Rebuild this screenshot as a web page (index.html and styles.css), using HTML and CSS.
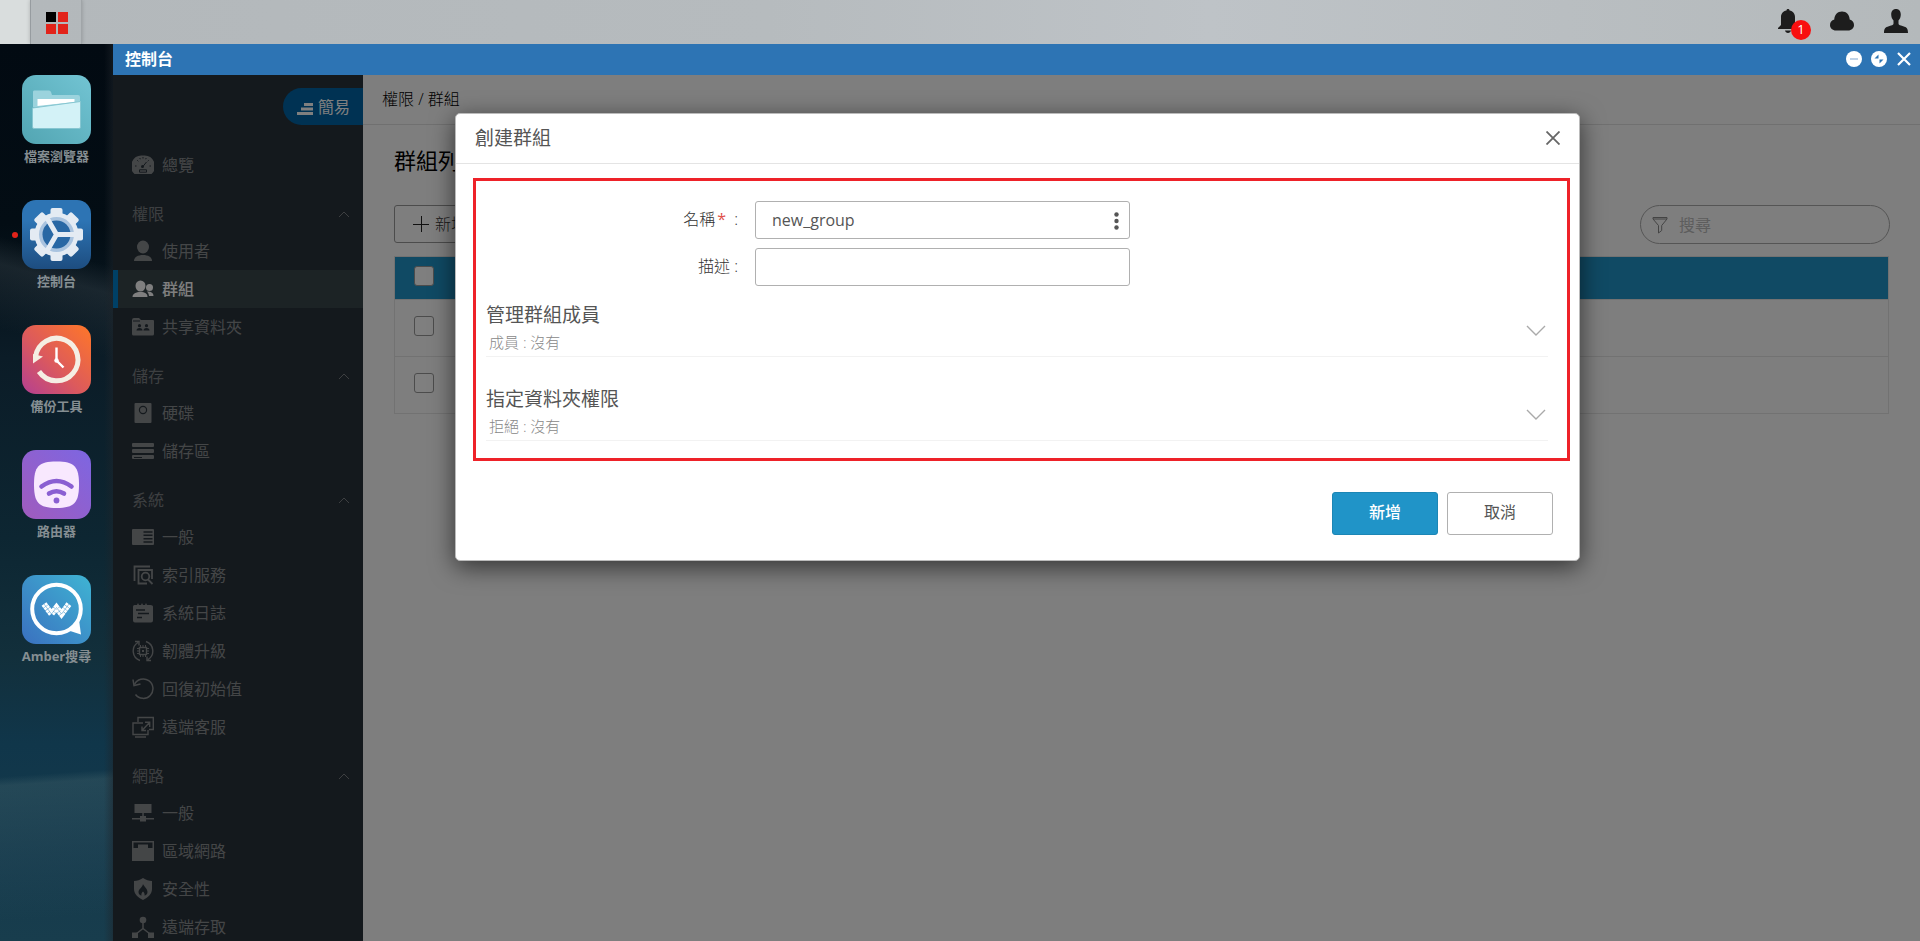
FILE: index.html
```html
<!DOCTYPE html>
<html lang="zh-Hant">
<head>
    <meta charset="UTF-8">
    <meta name="viewport" content="width=device-width, initial-scale=1.0">
    <title>控制台</title>
    <link rel="stylesheet" href="styles.css">
</head>
<body>
    <header class="topbar">
        <button class="logo-btn" aria-label="桌面">
            <svg width="24" height="24" viewBox="0 0 24 24">
                <path fill="#000" d="M1 1h10v10H1z"/>
                <path fill="#e2231a" d="M13 1h10v10H13zM1 13h10v10H1zM13 13h10v10H13z"/>
            </svg>
        </button>
        <div class="tray">
            <button class="tray-btn" aria-label="通知">
                <svg width="24" height="24" viewBox="0 0 24 24" fill="#1d1d1d">
                    <path d="M12 0c1 0 1.500.6 1.500 1.400C17 2 19 4.500 19 8v8l3 3v1H2v-1l3-3V8c0-3.500 2-6 5.500-6.600C10.500.6 11 0 12 0zM9 21.500h6c-.3 1.500-1.500 2.500-3 2.500s-2.700-1-3-2.500z"/>
                </svg>
                <span class="badge">1</span>
            </button>
            <button class="tray-btn" aria-label="雲端">
                <svg width="24" height="24" viewBox="0 0 24 24" fill="#1d1d1d">
                    <path d="M6 21.500c-3.500 0-6-2.400-6-5.500 0-2.800 1.700-4.800 4.300-5.400C4.300 6 7.500 2.500 12 2.500s7.700 3.500 7.700 8.100C22.300 11.200 24 13.200 24 16c0 3.100-2.500 5.500-6 5.500z"/>
                </svg>
            </button>
            <button class="tray-btn" aria-label="帳號">
                <svg width="24" height="24" viewBox="0 0 24 24" fill="#1d1d1d">
                    <path d="M12 0c3 0 4.800 2.200 4.800 5.500 0 2.500-.9 4.700-2.300 6v3c0 1 .8 1.500 2.500 2.100l3.500 1.100c2.500.9 3.500 2.300 3.500 6.300H0c0-4 1-5.400 3.500-6.300L7 16.600c1.700-.6 2.500-1.100 2.500-2.100v-3c-1.400-1.300-2.300-3.500-2.300-6C7.200 2.200 9 0 12 0z"/>
                </svg>
            </button>
        </div>
    </header>

    <div class="desktop">
        <nav class="dock">
            <button class="dock-item">
                <svg width="69" height="69" viewBox="0 0 69 69">
                    <defs><linearGradient id="g-file" x1="1" y1="0" x2="0" y2="1"><stop offset="0" stop-color="#72c4d3"/><stop offset="1" stop-color="#52a5b2"/></linearGradient></defs>
                    <rect width="69" height="69" rx="14" fill="url(#g-file)"/>
                    <path fill="#9bd3dd" d="M12 15.500h15q1.500 0 2 1.500l1 3h26q2 0 2 2v10H11V17q0-1.500 1-1.500z"/>
                    <path fill="#fff" d="M15.500 24h37v3L15.500 31z"/>
                    <path fill="#d3f2f7" stroke="#86c6d1" stroke-width="1" d="M10.500 33L58.500 26.500V52q0 1.500-1.500 1.500H12q-1.500 0-1.500-1.500z"/>
                </svg>
                <span>檔案瀏覽器</span>
            </button>
            <button class="dock-item running">
                <svg width="69" height="69" viewBox="0 0 69 69">
                    <defs><linearGradient id="g-gear" x1="0" y1="0" x2="0" y2="1"><stop offset="0.300" stop-color="#2d74b4"/><stop offset="1" stop-color="#1d4d80"/></linearGradient></defs>
                    <rect width="69" height="69" rx="14" fill="url(#g-gear)"/>
                    <g fill="#e4ebf3" transform="translate(34.500 34.500)">
                        <rect x="-6" y="-26.500" width="12" height="53" rx="2"/>
                        <rect x="-6" y="-26.500" width="12" height="53" rx="2" transform="rotate(45)"/>
                        <rect x="-6" y="-26.500" width="12" height="53" rx="2" transform="rotate(90)"/>
                        <rect x="-6" y="-26.500" width="12" height="53" rx="2" transform="rotate(135)"/>
                        <circle r="22"/>
                        <circle r="17.500" fill="#a9c3df"/>
                        <circle r="14" fill="#2867a4"/>
                        <path fill="none" stroke="#e4ebf3" stroke-width="5" d="M0 0H19M0 0L-9.500-16.500M0 0L-9.500 16.500"/>
                    </g>
                </svg>
                <span>控制台</span>
            </button>
            <button class="dock-item">
                <svg width="69" height="69" viewBox="0 0 69 69">
                    <defs><linearGradient id="g-backup" x1="1" y1="0" x2="0" y2="1"><stop offset="0" stop-color="#ff7728"/><stop offset="0.550" stop-color="#dc5a5c"/><stop offset="1" stop-color="#b43f92"/></linearGradient></defs>
                    <rect width="69" height="69" rx="14" fill="url(#g-backup)"/>
                    <path fill="none" stroke="#f5eee3" stroke-width="5" d="M13.500 32A21.300 21.300 0 1 1 17 46.500"/>
                    <path fill="#f5eee3" d="M11 29v9.500l10-7z"/>
                    <path fill="none" stroke="#fff" stroke-width="2.400" d="M34.500 22.500V35.500l7 7"/>
                    <circle cx="34.500" cy="35.500" r="2.200" fill="#fff"/>
                </svg>
                <span>備份工具</span>
            </button>
            <button class="dock-item">
                <svg width="69" height="69" viewBox="0 0 69 69">
                    <defs><linearGradient id="g-router" x1="1" y1="0" x2="0" y2="1"><stop offset="0" stop-color="#7d66e2"/><stop offset="1" stop-color="#a05bbd"/></linearGradient></defs>
                    <rect width="69" height="69" rx="14" fill="url(#g-router)"/>
                    <path fill="#f8e8fe" d="M34.500 11.500c18 0 22.500 5 22.500 23S52.500 58 34.500 58 12 52.500 12 34.500s4.500-23 22.500-23z"/>
                    <g fill="none" stroke="#8a5fd2" stroke-width="4.600" stroke-linecap="round">
                        <path d="M19.500 36.500q15-11 30 0"/>
                        <path d="M27 43.500q7.500-4.500 15 0"/>
                    </g>
                    <circle cx="34.500" cy="50.500" r="2.900" fill="#8a5fd2"/>
                </svg>
                <span>路由器</span>
            </button>
            <button class="dock-item">
                <svg width="69" height="69" viewBox="0 0 69 69">
                    <defs>
                        <linearGradient id="g-amber" x1="1" y1="0" x2="0" y2="1"><stop offset="0" stop-color="#3fb4d3"/><stop offset="1" stop-color="#3a70bf"/></linearGradient>
                    </defs>
                    <rect width="69" height="69" rx="14" fill="url(#g-amber)"/>
                    <circle cx="34.500" cy="34" r="24.300" fill="none" stroke="#fff" stroke-width="4"/>
                    <path fill="#fff" d="M57 45l2 14.500-14-4.500z"/>
                    <path fill="none" stroke="#fff" stroke-width="6" stroke-dasharray="2.800 0.400" d="M22 29l7.500 10 5-6.500 5 6.500 7.500-10"/>
                    <path fill="none" stroke="#3b90c8" stroke-width="0.500" d="M22 29l7.500 10 5-6.500 5 6.500 7.500-10"/>
                </svg>
                <span>Amber搜尋</span>
            </button>
        </nav>

        <section class="window">
            <div class="titlebar">
                <h1>控制台</h1>
                <div class="win-controls">
                    <button aria-label="縮小"><svg width="16" height="16" viewBox="0 0 16 16"><circle cx="8" cy="8" r="8" fill="#fff"/><path stroke="#a9c3df" stroke-width="1.500" d="M4 8h8"/></svg></button>
                    <button aria-label="放大"><svg width="16" height="16" viewBox="0 0 16 16"><circle cx="8" cy="8" r="8" fill="#fff"/><path fill="#2d74b4" d="M7.500 3.500v4h-4zM8.500 12.500v-4h4z"/></svg></button>
                    <button aria-label="關閉"><svg width="16" height="16" viewBox="0 0 16 16"><path fill="none" stroke="#fff" stroke-width="2.200" d="M2 2l12 12M14 2L2 14"/></svg></button>
                </div>
            </div>

            <div class="window-body">
                <aside class="sidebar">
                    <button class="mode-btn">
                        <svg width="16" height="16" viewBox="0 0 16 16" fill="#fff"><path d="M7 4h9v3H7zM4 8.500h12v3H4zM0 13h16v3H0z"/></svg>
                        簡易
                    </button>
                    <ul class="menu">
                        <li><a href="#">
                            <svg class="icon" viewBox="0 0 22 22"><path fill="currentColor" d="M11 1.500a10.700 10.700 0 0 1 8.500 18.500h-17A10.700 10.700 0 0 1 11 1.500z"/><path fill="none" stroke="#29323a" d="M11 3v1.500M3 12h1.500M17.500 12H19M5.300 6.300l1 1M7.800 4l.5 1.200M14.200 4l-.5 1.200M16.700 6.300l-1 1"/><path fill="none" stroke="#29323a" d="M10.500 13l4-5M7.500 15.800h7v2.400h-7z"/><circle cx="10.500" cy="12.500" r="1.500" fill="#29323a"/></svg>
                            總覽</a></li>
                    </ul>
                    <h2 class="menu-head">權限 <svg class="caret" viewBox="0 0 12 7"><path d="M1 6l5-5 5 5"/></svg></h2>
                    <ul class="menu">
                        <li><a href="#">
                            <svg class="icon" viewBox="0 0 22 22"><g fill="currentColor"><ellipse cx="11" cy="7" rx="6" ry="6.500"/><path d="M2 21c0-4 4-6 9-6s9 2 9 6z"/></g></svg>
                            使用者</a></li>
                        <li class="active"><a href="#">
                            <svg class="icon" viewBox="0 0 22 22"><g fill="currentColor"><ellipse cx="8.500" cy="8" rx="5" ry="5.500"/><path d="M.5 19c0-3.500 3.500-5 8-5s7 1.500 7 5z"/><circle cx="17.500" cy="9.500" r="3.500"/><path d="M15.500 13.500c4 0 6 1.500 6 4.500h-4.500c-.2-2-.8-3.500-2-4.300z"/></g></svg>
                            群組</a></li>
                        <li><a href="#">
                            <svg class="icon" viewBox="0 0 22 22"><path fill="currentColor" d="M0 4q0-2 2-2h5l2 2h12q1 0 1 1v13q0 1.500-1.500 1.500h-19Q0 19.500 0 18z"/><path stroke="#29323a" d="M1 5h7"/><g fill="#29323a"><circle cx="7.500" cy="9.700" r="1.600"/><circle cx="14.500" cy="9.700" r="1.600"/><path d="M4.500 14.500q0-2.500 3-2.500t3 2.500zM11.500 14.500q0-2.500 3-2.500t3 2.500z"/></g></svg>
                            共享資料夾</a></li>
                    </ul>
                    <h2 class="menu-head">儲存 <svg class="caret" viewBox="0 0 12 7"><path d="M1 6l5-5 5 5"/></svg></h2>
                    <ul class="menu">
                        <li><a href="#">
                            <svg class="icon" viewBox="0 0 22 22"><rect x="2.500" y="1" width="17" height="20" rx="1" fill="currentColor"/><circle cx="11" cy="8" r="3.600" fill="none" stroke="#29323a" stroke-width="1.200"/></svg>
                            硬碟</a></li>
                        <li><a href="#">
                            <svg class="icon" viewBox="0 0 22 22"><g fill="currentColor"><rect y="3" width="22" height="4" rx="1"/><rect y="9" width="22" height="4" rx="1"/><rect y="15" width="22" height="4" rx="1"/></g><path stroke="#29323a" d="M2 17.500h8"/></svg>
                            儲存區</a></li>
                    </ul>
                    <h2 class="menu-head">系統 <svg class="caret" viewBox="0 0 12 7"><path d="M1 6l5-5 5 5"/></svg></h2>
                    <ul class="menu">
                        <li><a href="#">
                            <svg class="icon" viewBox="0 0 22 22"><rect y="3" width="22" height="16" rx="1" fill="currentColor"/><path stroke="#29323a" stroke-width="1.400" d="M11.500 6h9M11.500 9.300h9M11.500 12.700h9M11.500 16h9"/></svg>
                            一般</a></li>
                        <li><a href="#">
                            <svg class="icon" viewBox="0 0 22 22"><g fill="none" stroke="currentColor" stroke-width="1.800"><path d="M2.500 17V2.500H18"/><path d="M15 19.500H6.500V6H20v9"/><circle cx="13.500" cy="12.500" r="3.800"/><path d="M16 15.500l4.500 4.500"/></g></svg>
                            索引服務</a></li>
                        <li><a href="#">
                            <svg class="icon" viewBox="0 0 22 22"><path fill="currentColor" d="M1 4.500q0-1.500 1.500-1.500H5l1-2 1 2h2l1-2 1 2h2l1-2 1 2h3.500Q21 3 21 4.500v14q0 2-2 2H3q-2 0-2-2z"/><path stroke="#29323a" stroke-width="1.300" d="M4 8h9M6 11.500h11M5 15.500h5"/></svg>
                            系統日誌</a></li>
                        <li><a href="#">
                            <svg class="icon" viewBox="0 0 22 22"><g fill="none" stroke="currentColor" stroke-width="1.400"><path d="M8 20.500A10 10 0 0 1 6 2.500M3 1.500h4v4M14 1.500a10 10 0 0 1 2 18M19 20.500h-4v-4"/><rect x="7.500" y="7.500" width="7" height="7"/></g><path fill="currentColor" d="M10 10h2v2h-2z"/><path stroke="currentColor" d="M8.500 5v2M11 5v2M13.500 5v2M8.500 15v2M11 15v2M13.500 15v2M5 8.500h2M5 11h2M5 13.500h2M15 8.500h2M15 11h2M15 13.500h2"/></svg>
                            韌體升級</a></li>
                        <li><a href="#">
                            <svg class="icon" viewBox="0 0 22 22"><g fill="none" stroke="currentColor" stroke-width="1.500"><path d="M2.500 6.500a9.700 9.700 0 1 1 1 10"/><path d="M1 1.500l1 6 6.500-1.500"/></g></svg>
                            回復初始值</a></li>
                        <li><a href="#">
                            <svg class="icon" viewBox="0 0 22 22"><g fill="none" stroke="currentColor" stroke-width="1.400"><path d="M6 6V1.500h15.300v12H17"/><path d="M11 7H1v11.500h15V14M3 21h11M10 14.500l7.500-8M13 6.300h4.700V11M10 10.500v4h4"/></g></svg>
                            遠端客服</a></li>
                    </ul>
                    <h2 class="menu-head">網路 <svg class="caret" viewBox="0 0 12 7"><path d="M1 6l5-5 5 5"/></svg></h2>
                    <ul class="menu">
                        <li><a href="#">
                            <svg class="icon" viewBox="0 0 22 22"><path fill="currentColor" d="M2.500 2h17v9h-17zM10.300 11h1.500v3h-1.500zM8 14h6v5.500H8zM0 16h22v1.400H0z"/></svg>
                            一般</a></li>
                        <li><a href="#">
                            <svg class="icon" viewBox="0 0 22 22"><path fill="currentColor" d="M0 1h22v20H0z"/><path fill="#29323a" d="M1.500 2.500h19v5.500H16V4.500H6V8H1.500z"/></svg>
                            區域網路</a></li>
                        <li><a href="#">
                            <svg class="icon" viewBox="0 0 22 22"><path fill="currentColor" d="M11 0c3 2 6 3 9 3v8c0 5-4 8.500-9 11-5-2.500-9-6-9-11V3c3 0 6-1 9-3z"/><path fill="#29323a" d="M11 6c.5 2 4.500 4.500 4.500 8 0 2-1.500 3.500-3 3.500.5-2-.5-3-1.500-4-1 1-2 2-1.500 4-1.500 0-3-1.500-3-3.500 0-3 4-4.500 4.500-8z"/></svg>
                            安全性</a></li>
                        <li><a href="#">
                            <svg class="icon" viewBox="0 0 22 22"><g fill="currentColor"><circle cx="11" cy="4" r="3.300"/><rect y="16.500" width="6" height="5.500"/><rect x="16" y="16.500" width="6" height="5.500"/></g><path fill="none" stroke="currentColor" stroke-width="1.500" d="M11 6v6.500L4 18M11 12.500L18 18"/></svg>
                            遠端存取</a></li>
                    </ul>
                </aside>

                <main class="content">
                    <div class="breadcrumb">權限 / 群組</div>
                    <div class="page">
                        <h2>群組列表</h2>
                        <div class="toolbar">
                            <button class="add-btn">
                                <svg width="16" height="16" viewBox="0 0 16 16"><path stroke="#222" d="M0 8.500h16M8.500 0v16"/></svg>
                                新增
                            </button>
                            <div class="search">
                                <svg width="16" height="18" viewBox="0 0 16 18"><path fill="none" stroke="#888" d="M1 1.500h14v1.500L9.700 9.500v5L6.500 17V9.500L1 3z"/><path stroke="#888" d="M1 3h14"/></svg>
                                <input type="text" placeholder="搜尋" aria-label="搜尋">
                            </div>
                        </div>
                        <table class="group-table">
                            <thead>
                                <tr><th><input type="checkbox" aria-label="全選"></th></tr>
                            </thead>
                            <tbody>
                                <tr><td><input type="checkbox" aria-label="選取"></td></tr>
                                <tr><td><input type="checkbox" aria-label="選取"></td></tr>
                            </tbody>
                        </table>
                    </div>
                </main>

                <div class="overlay">
                    <form class="modal" role="dialog" aria-labelledby="modal-title">
                        <div class="modal-header">
                            <h2 id="modal-title">創建群組</h2>
                            <button type="button" class="close-btn" aria-label="關閉">
                                <svg width="14" height="14" viewBox="0 0 14 14"><path fill="none" stroke="#666" stroke-width="1.800" d="M.5.5l13 13M13.500.5l-13 13"/></svg>
                            </button>
                        </div>
                        <div class="modal-body">
                            <div class="field">
                                <label for="name">名稱<span class="required">*</span> :</label>
                                <div class="input-wrap">
                                    <input type="text" id="name" value="new_group">
                                    <button type="button" class="more-btn" aria-label="更多">
                                        <svg width="5" height="18" viewBox="0 0 5 18" fill="#555"><circle cx="2.500" cy="2.500" r="2.200"/><circle cx="2.500" cy="9" r="2.200"/><circle cx="2.500" cy="15.500" r="2.200"/></svg>
                                    </button>
                                </div>
                            </div>
                            <div class="field">
                                <label for="desc">描述 :</label>
                                <div class="input-wrap">
                                    <input type="text" id="desc">
                                </div>
                            </div>
                            <button type="button" class="section">
                                <span class="section-text">
                                    <span class="section-title">管理群組成員</span>
                                    <span class="section-sub">成員 : 沒有</span>
                                </span>
                                <svg width="20" height="11" viewBox="0 0 20 11"><path fill="none" stroke="#aaa" stroke-width="1.400" d="M1 1l9 9 9-9"/></svg>
                            </button>
                            <button type="button" class="section">
                                <span class="section-text">
                                    <span class="section-title">指定資料夾權限</span>
                                    <span class="section-sub">拒絕 : 沒有</span>
                                </span>
                                <svg width="20" height="11" viewBox="0 0 20 11"><path fill="none" stroke="#aaa" stroke-width="1.400" d="M1 1l9 9 9-9"/></svg>
                            </button>
                        </div>
                        <div class="modal-footer">
                            <button type="submit" class="btn primary">新增</button>
                            <button type="button" class="btn">取消</button>
                        </div>
                    </form>
                </div>
            </div>
        </section>
    </div>
</body>
</html>
```
FILE: styles.css
```css
* {
    box-sizing: border-box;
}

body {
    margin: 0;
    height: 100vh;
    display: flex;
    flex-direction: column;
    overflow: hidden;
    font-family: "Open Sans", "Noto Sans CJK TC", sans-serif;
    font-size: 16px;
    line-height: 24px;
    color: #000;
}

button, input {
    font: inherit;
    color: inherit;
}

button {
    padding: 0;
    border: none;
    background: none;
    cursor: pointer;
}

svg {
    display: block;
    flex-shrink: 0;
}

h1, h2, ul {
    margin: 0;
    padding: 0;
}

/* top bar */
.topbar {
    flex: 0 0 44px;
    display: flex;
    justify-content: space-between;
    padding-left: 30px;
    background: linear-gradient(90deg, #d9dddd 30px, #b3b8bb 30px, #b6bbbe 40%, #bec3c7 63%, #b4b9bb 100%);
}

.logo-btn {
    width: 52px;
    display: flex;
    align-items: center;
    justify-content: center;
    padding: 1px 0 0 2px;
    border-left: 1px solid #979ca0;
    border-right: 1px solid #a0a5a8;
    box-shadow: 0 0 4px rgba(0, 0, 0, 0.2);
}

.tray {
    display: flex;
    align-items: center;
    gap: 30px;
    padding-right: 12px;
    padding-bottom: 3px;
}

.tray-btn {
    position: relative;
}

.badge {
    position: absolute;
    left: 15px;
    top: 11px;
    width: 20px;
    height: 20px;
    border-radius: 50%;
    background: #f80f0f;
    color: #fff;
    font-size: 13px;
    line-height: 19px;
}

/* dock */
.desktop {
    flex: 1;
    min-height: 0;
    display: flex;
}

.dock {
    flex: 0 0 113px;
    display: flex;
    flex-direction: column;
    align-items: center;
    gap: 35px;
    padding-top: 31px;
    background:
        linear-gradient(90deg, transparent 92%, rgba(30, 36, 42, 0.5)),
        linear-gradient(176deg, transparent 81%, rgba(80, 110, 115, 0.3) 82%, rgba(60, 90, 105, 0.2) 90%, transparent 97%),
        linear-gradient(195deg, transparent 24%, rgba(70, 80, 86, 0.3) 27%, transparent 34%),
        linear-gradient(180deg, #020a12, #030d14 20%, #0b1c27 35%, #0d2632 55%, #122f3b 68%, #10364a 78%, #183d4d);
}

.dock-item {
    position: relative;
    display: flex;
    flex-direction: column;
    align-items: center;
    gap: 3px;
    color: #858e92;
    font-size: 13px;
    font-weight: bold;
    line-height: 18px;
}

.dock-item.running::before {
    content: "";
    position: absolute;
    left: -10px;
    top: 32px;
    width: 6px;
    height: 6px;
    border-radius: 50%;
    background: #e2231a;
}

/* window */
.window {
    flex: 1;
    min-width: 0;
    display: flex;
    flex-direction: column;
}

.titlebar {
    flex: 0 0 31px;
    display: flex;
    align-items: center;
    justify-content: space-between;
    padding: 0 8px 2px 12px;
    background: #2d74b4;
    color: #fff;
}

.titlebar h1 {
    font-size: 16px;
    line-height: 24px;
}

.win-controls {
    display: flex;
    gap: 9px;
}

.window-body {
    flex: 1;
    min-height: 0;
    position: relative;
    display: flex;
}

/* sidebar */
.sidebar {
    flex: 0 0 250px;
    overflow: hidden;
    background: #29323a;
    color: #888c8f;
}

.mode-btn {
    display: flex;
    align-items: center;
    gap: 5px;
    width: 80px;
    height: 37px;
    margin: 13px 0 21px auto;
    padding-left: 14px;
    border-radius: 19px 0 0 19px;
    background: #0064a6;
    color: #fff;
}

.menu {
    list-style: none;
}

.menu a {
    display: flex;
    align-items: center;
    gap: 8px;
    height: 38px;
    padding-left: 19px;
    color: inherit;
    text-decoration: none;
}

.icon {
    width: 22px;
    height: 22px;
}

.menu .active a {
    padding-left: 14px;
    border-left: 5px solid #0080cc;
    background: #38464b;
    color: #fff;
    font-weight: 500;
}

.menu-head {
    display: flex;
    align-items: center;
    justify-content: space-between;
    height: 36px;
    margin-top: 12px;
    padding: 0 13px 0 19px;
    font-size: 16px;
    font-weight: normal;
    color: #7a7f82;
}

.caret {
    width: 12px;
    height: 7px;
    fill: none;
    stroke: #7a7f82;
}

/* page behind the dialog */
.content {
    flex: 1;
    min-width: 0;
    background: #fdfdfd;
}

.breadcrumb {
    height: 50px;
    padding: 12px 19px;
    border-bottom: 1px solid #e0e0e0;
    font-weight: 300;
}

.page {
    padding: 19px 31px;
}

.page h2 {
    font-size: 22px;
    font-weight: normal;
    line-height: 32px;
}

.toolbar {
    display: flex;
    justify-content: space-between;
    margin: 29px 0 12px;
}

.add-btn {
    display: flex;
    align-items: center;
    gap: 6px;
    height: 38px;
    padding: 0 18px;
    border: 1px solid #999;
    border-radius: 3px;
    color: #333;
    font-weight: 300;
}

.search {
    display: flex;
    align-items: center;
    gap: 11px;
    width: 250px;
    height: 39px;
    margin-right: -1px;
    padding: 0 11px;
    border: 1px solid #aaa;
    border-radius: 20px;
}

.search input {
    flex: 1;
    min-width: 0;
    padding: 0;
    border: none;
    background: none;
}

.search input::placeholder {
    color: #bbb;
}

.group-table {
    width: 100%;
    border-collapse: collapse;
    border: 1px solid #e4e4e4;
}

.group-table th, .group-table td {
    padding: 0 19px 4px;
    text-align: left;
    border-bottom: 1px solid #e4e4e4;
}

.group-table th {
    height: 43px;
    background: #2094c8;
}

.group-table td {
    height: 57px;
}

.group-table input {
    appearance: none;
    display: block;
    width: 20px;
    height: 20px;
    margin: 0;
    border: 1px solid #999;
    border-radius: 3px;
    background: #fff;
}

/* dialog */
.overlay {
    position: absolute;
    inset: 0;
    display: flex;
    justify-content: center;
    align-items: flex-start;
    padding: 38px 0 0 2px;
    background: rgba(0, 0, 0, 0.5);
}

.modal {
    width: 1125px;
    max-width: calc(100% - 40px);
    border: 1px solid #bbb;
    border-radius: 5px;
    background: #fff;
    color: #555;
    box-shadow: 0 6px 24px rgba(0, 0, 0, 0.6);
}

.modal-header {
    display: flex;
    align-items: center;
    justify-content: space-between;
    height: 50px;
    padding: 0 19px 2px;
    border-bottom: 1px solid #e4e4e4;
}

.modal-header h2 {
    font-size: 19px;
    font-weight: normal;
}

.modal-body {
    margin: 14px 9px 0 17px;
    padding: 20px 19px 17px 10px;
    border: 3px solid #ee2229;
}

.field {
    display: flex;
    align-items: center;
    margin-bottom: 9px;
}

.field label {
    flex: 0 0 269px;
    padding: 0 17px 2px 0;
    text-align: right;
    color: #333;
    font-weight: 300;
}

.required {
    margin: 0 4px 0 2px;
    color: #e0504a;
    font-weight: normal;
}

.input-wrap {
    position: relative;
    flex: 0 1 375px;
}

.input-wrap input {
    display: block;
    width: 100%;
    height: 38px;
    padding: 0 32px 0 16px;
    border: 1px solid #b0b0b0;
    border-radius: 3px;
    background: #fff;
}

.more-btn {
    position: absolute;
    right: 11px;
    top: 11px;
}

.section {
    display: flex;
    align-items: center;
    justify-content: space-between;
    width: 100%;
    padding: 6px 2px 0 0;
    border-bottom: 1px solid #f2f2f2;
    text-align: left;
}

.section svg {
    margin-top: 4px;
}

.section + .section {
    margin-top: 22px;
}

.section-title, .section-sub {
    display: block;
}

.section-title {
    font-size: 19px;
    line-height: 28px;
}

.section-sub {
    padding-left: 3px;
    font-size: 15px;
    font-weight: 300;
    line-height: 27px;
    color: #888;
}

.modal-footer {
    display: flex;
    justify-content: flex-end;
    gap: 9px;
    padding: 31px 26px 25px;
}

.btn {
    width: 106px;
    height: 43px;
    padding-bottom: 4px;
    border: 1px solid #b0b0b0;
    border-radius: 3px;
    background: #fff;
}

.btn.primary {
    border-color: #1c86b5;
    background: #2094c8;
    color: #fff;
    font-weight: 500;
}
```
